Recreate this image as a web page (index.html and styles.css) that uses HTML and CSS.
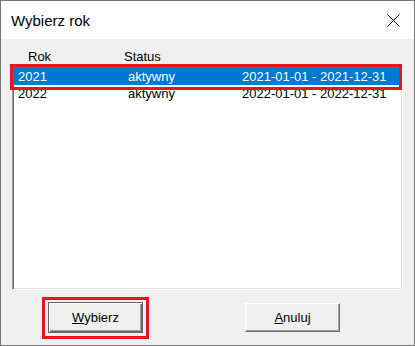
FILE: index.html
```html
<!DOCTYPE html>
<html lang="pl">
<head>
    <meta charset="UTF-8">
    <meta name="viewport" content="width=device-width, initial-scale=1.0">
    <title>Wybierz rok</title>
    <link rel="stylesheet" href="styles.css">
</head>
<body>

    <div class="dialog">
        <div class="titlebar">
            <span class="title">Wybierz rok</span>
            <svg class="close" width="13" height="13" viewBox="0 0 13 13">
                <path d="M0.5 0.5 L12.5 12.5 M12.5 0.5 L0.5 12.5" stroke="#000" stroke-width="1" fill="none"/>
            </svg>
        </div>

        <div class="content">
            <div class="headers">
                <span class="col-rok">Rok</span>
                <span class="col-status">Status</span>
            </div>

            <div class="listbox">
                <div class="row selected">
                    <span>2021</span>
                    <span>aktywny</span>
                    <span>2021-01-01 - 2021-12-31</span>
                </div>
                <div class="row">
                    <span>2022</span>
                    <span>aktywny</span>
                    <span>2022-01-01 - 2022-12-31</span>
                </div>
            </div>

            <div class="buttons">
                <button class="btn btn-default"><u>W</u>ybierz</button>
                <button class="btn"><u>A</u>nuluj</button>
            </div>

            <!-- czerwone ramki zaznaczenia -->
            <div class="mark mark-row"></div>
            <div class="mark mark-btn"></div>
        </div>
    </div>

</body>
</html>
```

FILE: styles.css
```css
body {
    margin: 0;
    font-family: "Liberation Sans", Arial, sans-serif;
    font-size: 13px;
    color: #000;
    background: #fff;
}

.dialog {
    width: 415px;
    height: 346px;
    box-sizing: border-box;
    border: 1px solid #777;
    display: flex;
    flex-direction: column;
}

.titlebar {
    height: 38px;
    background: #fff;
    display: flex;
    align-items: center;
    justify-content: space-between;
    padding: 0 14px 0 10px;
}

.title {
    font-size: 15px;
    line-height: 17px;
}

.close {
    margin-top: 1px;
}

.content {
    position: relative;
    flex: 1;
    background: #f0f0f0;
}

.headers {
    display: flex;
    height: 16px;
    line-height: 16px;
    margin-top: 10px;
    margin-bottom: 1px;
}

.col-rok {
    margin-left: 27px;
    width: 96px;
}

.listbox {
    margin-left: 11px;
    width: 391px;
    height: 224px;
    box-sizing: border-box;
    background: #fff;
    border-top: 1px solid #a0a0a0;
    border-left: 1px solid #a0a0a0;
    border-right: 1px solid #fff;
    border-bottom: 1px solid #fff;
    box-shadow: inset 1px 1px 0 #696969, inset -1px -1px 0 #e3e3e3;
    padding: 1px;
}

.row {
    display: grid;
    grid-template-columns: 110px 114px auto;
    height: 17px;
    line-height: 17px;
    padding-left: 4px;
    margin-right: 2px;
}

.row.selected {
    background: #0078d7;
    color: #fff;
}

.buttons {
    display: flex;
    align-items: center;
    height: 31px;
    margin-top: 12px;
    padding-left: 47px;
    gap: 102px;
}

.btn {
    width: 95px;
    height: 29px;
    font-family: "Liberation Sans", Arial, sans-serif;
    font-size: 13px;
    color: #000;
    background: #f0f0f0;
    border: 1px solid;
    border-color: #fff #696969 #696969 #fff;
    box-shadow: inset -1px -1px 0 #a0a0a0;
    padding: 0;
}

.btn-default {
    height: 31px;
    border: 1px solid #646464;
    box-shadow: inset 1px 1px 0 #fff, inset -1px -1px 0 #696969, inset -2px -2px 0 #a0a0a0;
}

.mark {
    position: absolute;
    border: 3px solid #e8141f;
    box-sizing: border-box;
}

.mark-row {
    left: 9px;
    top: 25px;
    width: 392px;
    height: 26px;
}

.mark-btn {
    left: 41px;
    top: 258px;
    width: 107px;
    height: 42px;
}
```
